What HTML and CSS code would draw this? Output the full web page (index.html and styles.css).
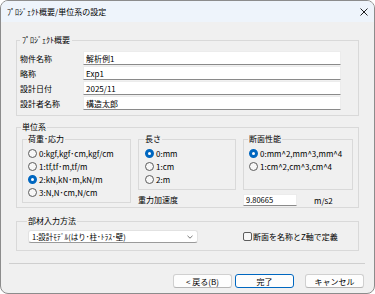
FILE: index.html
```html
<!DOCTYPE html>
<html lang="ja">
<head>
    <meta charset="UTF-8">
    <meta name="viewport" content="width=device-width, initial-scale=1.0">
    <link rel="stylesheet" href="styles.css">
    <title>ﾌﾟﾛｼﾞｪｸﾄ概要/単位系の設定</title>
</head>
<body>
    <div class="window">
        <div class="titlebar">
            <span class="title">ﾌﾟﾛｼﾞｪｸﾄ概要/単位系の設定</span>
            <svg class="close" width="8" height="8" viewBox="0 0 8 8">
                <path d="M0.5 0.5L7.5 7.5M7.5 0.5L0.5 7.5" stroke="#1f1f1f" stroke-width="1"/>
            </svg>
        </div>

        <div class="content">
            <fieldset class="group project">
                <legend>ﾌﾟﾛｼﾞｪｸﾄ概要</legend>
                <div class="form-grid">
                    <label>物件名称</label><input type="text" value="解析例1">
                    <label>略称</label><input type="text" value="Exp1">
                    <label>設計日付</label><input type="text" value="2025/11">
                    <label>設計者名称</label><input type="text" value="構造太郎">
                </div>
            </fieldset>

            <fieldset class="group units">
                <legend>単位系</legend>
                <div class="units-body">
                    <fieldset class="sub load">
                        <legend>荷重･応力</legend>
                        <label class="option"><span class="radio"></span>0:kgf,kgf･cm,kgf/cm</label>
                        <label class="option"><span class="radio"></span>1:tf,tf･m,tf/m</label>
                        <label class="option"><span class="radio checked"></span>2:kN,kN･m,kN/m</label>
                        <label class="option"><span class="radio"></span>3:N,N･cm,N/cm</label>
                    </fieldset>

                    <div class="units-right">
                        <fieldset class="sub length">
                            <legend>長さ</legend>
                            <label class="option"><span class="radio checked"></span>0:mm</label>
                            <label class="option"><span class="radio"></span>1:cm</label>
                            <label class="option"><span class="radio"></span>2:m</label>
                        </fieldset>
                        <fieldset class="sub section">
                            <legend>断面性能</legend>
                            <label class="option"><span class="radio checked"></span>0:mm^2,mm^3,mm^4</label>
                            <label class="option"><span class="radio"></span>1:cm^2,cm^3,cm^4</label>
                        </fieldset>
                        <div class="gravity-label">重力加速度</div>
                        <div class="gravity-value">
                            <input type="text" value="9.80665">
                            <span class="unit">m/s2</span>
                        </div>
                    </div>
                </div>
            </fieldset>

            <fieldset class="group member">
                <legend>部材入力方法</legend>
                <div class="member-body">
                    <div class="select">
                        <span>1:設計ﾓﾃﾞﾙ(はり･柱･ﾄﾗｽ･壁)</span>
                        <svg width="6" height="4" viewBox="0 0 6 4">
                            <path d="M0.5 0.8L3 3.2L5.5 0.8" fill="none" stroke="#555" stroke-width="0.8"/>
                        </svg>
                    </div>
                    <label class="check"><span class="box"></span>断面を名称とZ軸で定義</label>
                </div>
            </fieldset>

            <div class="separator"></div>

            <div class="buttons">
                <button class="btn back">&lt; 戻る(B)</button>
                <button class="btn primary">完了</button>
                <button class="btn cancel">キャンセル</button>
            </div>
        </div>
    </div>
</body>
</html>
```

FILE: styles.css
```css
body {
    margin: 0;
    padding: 0;
    background-color: #ffffff;
    font-family: "Noto Sans CJK JP", "Liberation Sans", sans-serif;
    font-size: 8px;
    color: #000;
}

.window {
    width: 375px;
    height: 294px;
    box-sizing: border-box;
    border: 1px solid #8c8c8c;
    border-radius: 8px;
    background-color: #f0f0f0;
    overflow: hidden;
}

.titlebar {
    height: 21px;
    display: flex;
    align-items: center;
    justify-content: space-between;
    padding: 0 6px 0 6px;
    background-color: #eef4fb;
}

.title {
    font-size: 8px;
    line-height: 12px;
}

.close {
    display: block;
}

.content {
    padding: 12px 9px 0 8px;
}

fieldset {
    margin: 0;
    min-width: 0;
    border: 1px solid #d9d9d9;
}

legend {
    padding: 0 1px;
    margin-left: -1px;
    line-height: 12px;
    font-size: 8px;
}

.group {
    margin: 0 6px 0 7px;
}

/* project */
.project {
    padding: 5px 17px 5px 3px;
}

.project legend {
    margin-left: 0;
    padding: 0 2px;
}

.form-grid {
    display: grid;
    grid-template-columns: 63px 1fr;
    grid-auto-rows: 14px;
    row-gap: 1px;
    align-items: center;
}

input {
    font: inherit;
    color: #000;
    box-sizing: border-box;
    margin: 0;
    height: 14px;
    padding: 0 2px;
    background-color: #fff;
    border: 1px solid #ececec;
    border-bottom: 1px solid #8a8a8a;
    outline: none;
}

/* units */
.units {
    margin-top: 5px;
    padding: 0 5px 1px 5px;
}

.units-body {
    display: flex;
    align-items: flex-start;
    gap: 7px;
}

.sub {
    padding: 2px 4px 3px 5px;
}

.load {
    width: 109px;
    box-sizing: border-box;
}

.length {
    padding-left: 6px;
}

.units-right {
    display: grid;
    grid-template-columns: 98px 110px;
    column-gap: 7px;
}

.option {
    display: flex;
    align-items: center;
    height: 13px;
    gap: 2px;
    white-space: nowrap;
}

.radio {
    width: 9px;
    height: 9px;
    box-sizing: border-box;
    border-radius: 50%;
    border: 1px solid #5c5c5c;
    background-color: #f7f7f7;
    flex: none;
}

.radio.checked {
    border: 3px solid #0067c0;
    background-color: #fff;
}

.gravity-label {
    margin-top: 3px;
    height: 12px;
    display: flex;
    align-items: center;
}

.gravity-value {
    margin-top: 3px;
    display: flex;
    align-items: center;
    gap: 17px;
}

.gravity-value input {
    width: 54px;
    height: 12px;
    font-size: 7.5px;
}

.unit {
    padding-top: 2px;
}

/* member */
.member {
    margin-top: 7px;
    padding: 3px 5px 7px 11px;
}

.member-body {
    display: flex;
    align-items: center;
}

.select {
    width: 170px;
    height: 13px;
    box-sizing: border-box;
    display: flex;
    align-items: center;
    justify-content: space-between;
    padding: 0 4px 0 3px;
    background-color: #fff;
    border: 1px solid #e2e2e2;
    border-bottom-color: #9a9a9a;
    border-radius: 3px;
    font-size: 7.5px;
}

.check {
    margin-left: 45px;
    display: flex;
    align-items: center;
    gap: 1px;
}

.box {
    width: 9px;
    height: 9px;
    box-sizing: border-box;
    border: 1px solid #5c5c5c;
    border-radius: 2px;
    background-color: #f7f7f7;
}

.separator {
    margin-top: 12px;
    height: 1px;
    background-color: #cfcfcf;
}

.buttons {
    margin-top: 10px;
    margin-right: 1px;
    display: flex;
    justify-content: flex-end;
}

.btn {
    font: inherit;
    color: #000;
    width: 59px;
    height: 14px;
    padding: 0;
    background-color: #fdfdfd;
    border: 1px solid #d0d0d0;
    border-bottom-color: #b5b5b5;
    border-radius: 3px;
}

.btn.primary {
    margin-left: 3px;
    border-color: #0067c0;
}

.btn.cancel {
    margin-left: 11px;
}
```
